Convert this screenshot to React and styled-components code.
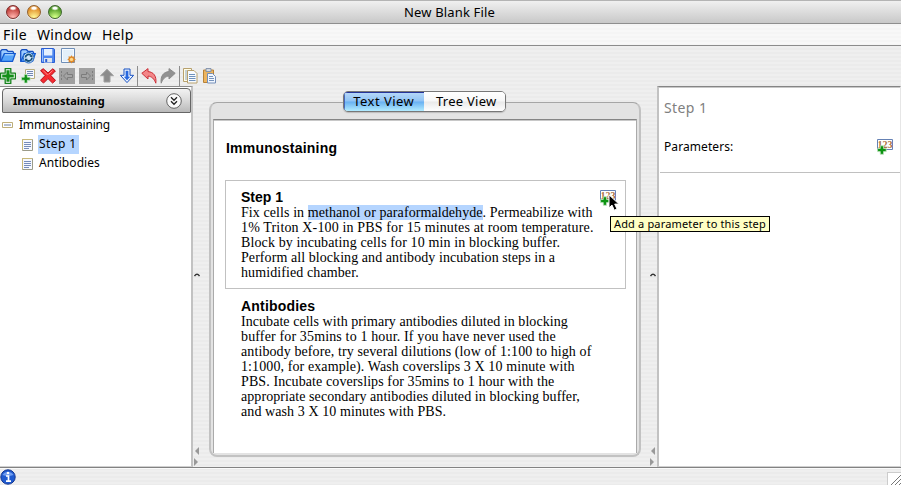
import React from "react";
import styled, { createGlobalStyle, css } from "styled-components";

const ui = `"Noto Sans", "Open Sans", sans-serif`;
const stripes = "repeating-linear-gradient(to bottom, #ebebeb 0 2px, #efefef 2px 4px)";

const GlobalStyle = createGlobalStyle`
  * { box-sizing: border-box; }
  html, body { margin: 0; padding: 0; overflow: hidden; }
  body { font-family: ${ui}; color: #000; }
  svg { display: block; flex: none; }
`;

const Window = styled.div`
  width: 901px;
  height: 485px;
  display: grid;
  grid-template-rows: 24px 22px 20px 20px 382px 17px;
  background: ${stripes};
  overflow: hidden;
`;

const Label = styled.span`
  display: block;
  white-space: pre;
  font-family: ${ui};
  font-size: ${(p) => p.$size || 13}px;
  font-weight: ${(p) => p.$weight || 400};
  line-height: ${(p) => p.$line || 18}px;
  letter-spacing: ${(p) => p.$track || 0}px;
  color: ${(p) => p.$color || "#000"};
`;

const TitleBar = styled.header`
  display: grid;
  grid-template-columns: 95px 1fr 97px;
  align-items: center;
  justify-items: center;
  background: linear-gradient(#f0f0f0, #dcdcdc 50%, #c8c8c8);
  border-top: 1px solid #b4b4b4;
  border-bottom: 1px solid #8e8e8e;
`;

const Lights = styled.div`
  display: flex;
  gap: 7px;
  justify-self: start;
  padding-left: 6px;
`;

const Light = styled.i`
  width: 14px;
  height: 14px;
  border-radius: 50%;
  border: 1px solid ${(p) => p.$edge};
  background:
    radial-gradient(ellipse 4px 2.5px at 50% 18%, #fff 40%, transparent),
    radial-gradient(circle at 50% 100%, ${(p) => p.$glow} 10%, ${(p) => p.$tone} 75%);
  box-shadow: 0 1px 0 #eee;
`;

const MenuBar = styled.nav`
  display: flex;
  align-items: center;
  gap: 10px;
  padding-left: 3px;
  border-bottom: 1px solid #8c8c8c;
  background: repeating-linear-gradient(to bottom, #f5f5f5 0 2px, #f8f8f8 2px 4px);
`;

const ToolBar = styled.div`
  display: flex;
  align-items: center;
  gap: ${(p) => p.$gap || 4}px;
`;

const ToolDivider = styled.i`
  width: 1px;
  height: 20px;
  background: #8d8d8d;
  margin: 0 -1.4px;
`;

const Content = styled.main`
  display: grid;
  grid-template-columns: 193px 16px 432px 16px 244px;
  border-bottom: 1px solid #828282;
`;

const Sidebar = styled.aside`
  background: #fff;
  border-top: 1px solid #8b8b8b;
  border-right: 2px solid #c2c2c2;
  border-bottom: 1px solid #d0d0d0;
  padding: 1px 0 0 2px;
`;

const SectionHeader = styled.div`
  display: flex;
  align-items: center;
  justify-content: space-between;
  width: 189px;
  height: 25px;
  padding: 0 8px 0 10px;
  border: 1px solid #666;
  border-radius: 4px 4px 1px 1px;
  background: linear-gradient(#f2f2f2, #dcdcdc 45%, #b9b9b9);
`;

const Tree = styled.div`
  display: flex;
  flex-direction: column;
  padding-top: 3px;
`;

const TreeRow = styled.div`
  display: flex;
  align-items: center;
  height: 19px;
  gap: 5px;
  padding-left: ${(p) => (p.$child ? 20 : 0)}px;
`;

const TreeText = styled(Label)`
  padding: 0 3px 0 1px;
  height: 19px;
  background: ${(p) => (p.$selected ? "#b5d5ff" : "transparent")};
`;

const Splitter = styled.div`
  display: flex;
  flex-direction: column;
  align-items: flex-start;
  padding: ${(p) => (p.$right ? "187px 0 0 9px" : "187px 0 0 1px")};
`;

const SplitMark = styled.svg`
  margin-top: ${(p) => p.$gap || 0}px;
`;

const Center = styled.section`
  padding-top: 16px;
`;

const GroupBox = styled.div`
  height: 355px;
  display: flex;
  flex-direction: column;
  align-items: center;
  border: 2px solid #c2c2c2;
  border-top: 1px solid #a6a6a6;
  border-radius: 8px;
  background: #e3e3e3;
  padding: 0 2px 2px;
`;

const Tabs = styled.div`
  display: flex;
  width: 163px;
  height: 21px;
  margin-top: -12px;
  margin-right: 2px;
  border: 1px solid #777;
  border-radius: 5px;
  overflow: hidden;
  flex: none;
  box-shadow: 0 1px 1px #bbb;
`;

const Tab = styled.div`
  display: flex;
  justify-content: center;
  width: 81px;
  height: 19px;
  ${(p) =>
    p.$active
      ? css`
          background: linear-gradient(#b9d9f8, #90c3f5 48%, #68b0f2 52%, #b2ecff);
          box-shadow: inset 0 1px #25349a, inset 1px 0 #4668bd;
        `
      : css`
          background: linear-gradient(#fff, #f7f7f7 48%, #e9e9e9 52%, #fff);
          padding-left: 4px;
        `}
`;

const Editor = styled.article`
  width: 100%;
  height: 334px;
  margin-top: 7px;
  flex: none;
  background: #fff;
  border: 1px solid #aaa;
  border-top-color: #858585;
  border-bottom: 0;
  box-shadow: inset 0 1px #c8c8c8;
  padding: 20px 11px 0 11px;
`;

const Heading = styled.h2`
  margin: 0;
  white-space: pre;
  font: 700 14px/16px "Liberation Sans", Arial, sans-serif;
  letter-spacing: ${(p) => p.$track || 0}px;
`;

const DocTitle = styled(Heading)`
  padding-left: 1px;
`;

const StepBlock = styled.section`
  position: relative;
  width: 401px;
  height: 109px;
  padding: 8px 0 0 15px;
  border: 1px solid ${(p) => (p.$boxed ? "#c1c1c1" : "transparent")};
  margin-top: ${(p) => (p.$boxed ? 24 : 0)}px;
`;

const Line = styled.div`
  white-space: pre;
  font: 14px/15px "Liberation Serif", "Times New Roman", serif;
  letter-spacing: ${(p) => p.$track || 0}px;
`;

const Mark = styled.mark`
  display: inline-block;
  height: 15px;
  color: inherit;
  background: #b5d5ff;
`;

const StepAction = styled.div`
  position: absolute;
  top: 9px;
  right: 9px;
`;

const Inspector = styled.aside`
  background: #fff;
  border-top: 1px solid #858585;
  border-left: 2px solid #c2c2c2;
  border-right: 1px solid #e6e6e6;
  border-bottom: 1px solid #d0d0d0;
  box-shadow: inset 0 1px #c8c8c8;
`;

const InspectorHead = styled.div`
  height: 86px;
  margin-left: 1px;
  padding: 12px 7px 0 4px;
  border-bottom: 1px solid #c0c0c0;
`;

const ParamRow = styled.div`
  display: flex;
  justify-content: space-between;
  align-items: center;
  margin-top: 21px;
`;

const StatusBar = styled.footer`
  display: flex;
  justify-content: space-between;
  align-items: flex-end;
  padding-bottom: 0;
  box-shadow: inset 0 1px #fafafa;
`;

const Grip = styled.div`
  width: 14px;
  height: 13px;
  background: #fff;
  border: 1px solid #ccc;
  border-width: 1px 0 0 1px;
`;

const Tooltip = styled.div`
  position: absolute;
  left: 610px;
  top: 216px;
  width: 160px;
  height: 16px;
  padding-left: 3px;
  border: 1px solid #000;
  background: #ffffc4;
`;

const Pointer = styled.svg`
  position: absolute;
  left: 608px;
  top: 194px;
`;

const Digits = styled.text`
  font: 700 10px "Liberation Serif", serif;
  fill: #ab7040;
`;

const Icon = ({ w = 16, h = 16, children }) => (
  <svg width={w} height={h} viewBox={`0 0 ${w} ${h}`} fill="none">
    {children}
  </svg>
);

const Folder = ({ refresh }) => (
  <Icon>
    <path d="M.7 13V3L2 1.700h4.500L8 3.300h4.600l.9.9V6" fill="#9ccbff" stroke="#164fc0" strokeWidth="1.3" />
    <path d="M.8 13.400 4.300 5.600h11l-2.800 7.800z" fill="#56a4fa" stroke="#1459d0" strokeWidth="1.300" />
    <path d="M5 6.800h8.500" stroke="#c6e4ff" />
    {refresh && (
      <>
        <circle cx="8.6" cy="9.7" r="5.3" fill="#cfe5fb" stroke="#276bc5" />
        <path d="M5.4 9.5a3.3 3.3 0 0 1 5.8-2M12 9.7a3.4 3.4 0 0 1-5.8 2.3" stroke="#15507b" strokeWidth="1.8" />
        <path d="m9.5 8.5 3-2v3zM4.6 10.7h3l-2 2.8z" fill="#174c72" />
      </>
    )}
  </Icon>
);

const Save = () => (
  <Icon>
    <path d="M1.5.5h12.2l.8.8v13.2h-13z" fill="#4d86ef" stroke="#2b5ed3" />
    <path d="M4 1h8.3v6.500H4z" fill="#e4efff" />
    <path d="M4 10h8v4.5H4z" fill="#dce4ee" />
    <path d="M5.2 11h2v3h-2z" fill="#2b5ed3" />
    <path d="M2.5 1.500v12" stroke="#9ac1ff" />
  </Icon>
);

const NewDoc = () => (
  <Icon>
    <path d="M1.5.5h13v14h-13z" fill="#f5faff" stroke="#6f8fb9" />
    <path d="M3 2h10v11H3z" fill="#e3eff9" />
    <path d="m11.5 7.3 1.2 1.4 1.9-.4-.3 1.9 1.5 1.2-1.5 1.1.3 1.9-1.9-.4-1.2 1.5-1.1-1.5-1.9.4.3-1.9-1.5-1.1 1.5-1.2-.3-1.9 1.9.4z" fill="#df8829" />
    <circle cx="11.5" cy="11.4" r="1.7" fill="#ffd989" />
  </Icon>
);

const Add = () => (
  <Icon>
    <path d="M5.200.6h5.600v4.600h4.600v5.600h-4.600v4.600H5.200v-4.600H.6V5.200h4.600z" fill="#fff" stroke="#16821c" strokeWidth="1.300" strokeLinejoin="round" />
    <path d="M6.4 2.2h3.2v4.200h4.200v3.200H9.600v4.200H6.4V9.600H2.200V6.400h4.200z" fill="#138f18" />
  </Icon>
);

const AddChild = () => (
  <Icon>
    <path d="M5.5 1.5h9v9h-9z" fill="#f5f8ff" stroke="#b8ae80" />
    <path d="M7 3.5h6M7 5.5h6M7 7.5h6" stroke="#7287b2" />
    <path d="M4.3 6.400h3v2.8h2.8v3H7.3V15h-3v-2.8H1.5v-3h2.8z" fill="#119017" stroke="#c9edca" strokeWidth=".7" />
  </Icon>
);

const Delete = () => (
  <Icon>
    <path d="M.6 2.6 3.2.7 8 4.9 12.8.800 15.400 3l-4.500 4.6 4.600 4.8-2.900 2.700-4.600-4.500-4.500 4.500L.5 12.300l4.600-4.700z" fill="#f52b31" stroke="#b80e18" />
    <path d="m3.2 2.5 4.500 4.500M12.500 2.500 8.700 6.300" stroke="#ff8787" />
  </Icon>
);

const Indent = ({ flip }) => (
  <Icon>
    <path d="M0 0h16v16H0z" fill="#a0a0a0" />
    <g transform={flip ? "matrix(-1 0 0 1 16 0)" : undefined} stroke="#7c7c7c">
      <path d="M2.5 3v2m0 1.5v2m0 1.5v2" />
      <path d="m4.5 8 4-4v2.5h5v3h-5V12z" fill="#a4a4a4" />
    </g>
  </Icon>
);

const MoveUp = () => (
  <Icon>
    <path d="m8 1.3 6.5 6.4H11V14H5V7.7H1.5z" fill="#8c8c8c" stroke="#a0a0a0" />
  </Icon>
);

const MoveDown = () => (
  <Icon>
    <path d="M5 1h6v6.300h3.600L8 14.600 1.400 7.300H5z" fill="#eff6ff" stroke="#1750c3" />
    <path d="M6.6 2.800h2.800v5.900h1.800L8 12.200 4.800 8.700h1.800z" fill="#2767df" />
  </Icon>
);

const Turn = ({ redo }) => (
  <Icon>
    <g transform={redo ? "matrix(-1 0 0 1 16 0)" : undefined}>
      <path
        d="M.8 5.3 7 .6v3c5.500.4 8.800 4.400 7.800 11.600C13.200 10.800 10.800 8.400 7 8.100V11z"
        fill={redo ? "#929292" : "#f38789"}
        stroke={redo ? "#8c8c8c" : "#cb3038"}
      />
    </g>
  </Icon>
);

const Copy = () => (
  <Icon>
    <path d="M1.5.5h8v13h-8z" fill="#fffde8" stroke="#b7a06d" />
    <path d="M3 3h4M3 5h4M3 7h4M3 9h4M3 11h3" stroke="#8ca4c0" />
    <path d="M5.5 2.5h6.500l3 3v9.500H5.500z" fill="#f8fbff" stroke="#b7a06d" />
    <path d="M7 6.5h6M7 8.5h6.500M7 10.5h6.500M7 12.5h6.500" stroke="#6e91bd" />
  </Icon>
);

const Paste = () => (
  <Icon>
    <path d="M1.5 2h10v12.500h-10z" fill="#edb55f" stroke="#b78238" />
    <path d="M4 .6h5v3H4z" fill="#d8dde5" stroke="#8090a9" />
    <path d="M5.5 5.500h5l3 3v6.500h-8z" fill="#f2f7ff" stroke="#758eb7" />
    <path d="M7 8.500h4M7 10.500h5M7 12.500h5" stroke="#7593bc" />
  </Icon>
);

const Page = () => (
  <Icon w={11} h={12}>
    <path d="M.5.5h10v11H.5z" fill="#f5f8ff" stroke="#9b9b89" />
    <path d="M.5 11V.5H10" stroke="#c8b878" />
    <path d="M2 3.5h7M2 5.5h7M2 7.5h7M2 9.5h5" stroke="#768cb9" />
  </Icon>
);

const Collapse = () => (
  <Icon w={11} h={7}>
    <path d="M.5.5h10v5H.5z" fill="#fff" stroke="#bdad78" />
    <path d="M2 3h7" stroke="#667da8" />
  </Icon>
);

const Chevrons = () => (
  <Icon>
    <circle cx="8" cy="8" r="7.3" fill="#fafafa" stroke="#626262" />
    <path d="m5 4.3 3 3 3-3M5 8.3l3 3 3-3" stroke="#222" strokeWidth="1.3" />
  </Icon>
);

const AddParam = () => (
  <Icon>
    <path d="M.5.5h15v10H.5z" fill="#fff" stroke="#6581b4" />
    <Digits x=".6" y="8.600">123</Digits>
    <path d="M3.300 6.800h3.200v2.600h2.700v3.200H6.500v2.700H3.300v-2.700H.6V9.400h2.700z" fill="#0d9412" stroke="#bce0bd" strokeWidth=".8" />
  </Icon>
);

const Info = () => (
  <Icon>
    <circle cx="8" cy="8" r="7.2" fill="#205bd0" stroke="#123692" />
    <path d="M2.5 6a6 5 0 0 1 11 0q-5.500 2-11 0" fill="#719def" />
    <circle cx="8" cy="4" r="1.3" fill="#fff" />
    <path d="M6 7h2.500v5M6 12.2h5" stroke="#fff" strokeWidth="1.7" />
  </Icon>
);

const SplitMarks = () => (
  <>
    <SplitMark width="6" height="4" viewBox="0 0 6 4">
      <path d="M.5 3q2.500-3.500 5 0" fill="none" stroke="#333" strokeWidth="1.4" />
    </SplitMark>
    <SplitMark $gap={170} width="5" height="8" viewBox="0 0 5 8">
      <path d="M5 0v8L1 4z" fill="#999" />
    </SplitMark>
    <SplitMark $gap={3} width="5" height="8" viewBox="0 0 5 8">
      <path d="M0 0v8l4-4z" fill="#999" />
    </SplitMark>
  </>
);

const antibodyLines = [
  ["Incubate cells with primary antibodies diluted in blocking", 0.05],
  ["buffer for 35mins to 1 hour. If you have never used the", 0.145],
  ["antibody before, try several dilutions (low of 1:100 to high of", 0.1],
  ["1:1000, for example). Wash coverslips 3 X 10 minute with", 0.1],
  ["PBS. Incubate coverslips for 35mins to 1 hour with the", 0.1],
  ["appropriate secondary antibodies diluted in blocking buffer,", 0.07],
  ["and wash 3 X 10 minutes with PBS.", 0.09],
];

export default function App() {
  return (
    <>
      <GlobalStyle />
      <Window>
        <TitleBar>
          <Lights>
            <Light $edge="#7b2e2c" $tone="#bd3a36" $glow="#ffb0aa" />
            <Light $edge="#92602d" $tone="#e08a25" $glow="#fff391" />
            <Light $edge="#3d662c" $tone="#4a9420" $glow="#d0ff85" />
          </Lights>
          <Label $size={13} $track={0.15}>New Blank File</Label>
        </TitleBar>
        <MenuBar>
          <Label $size={14} $track={0.4}>File</Label>
          <Label $size={14} $track={0.3}>Window</Label>
          <Label $size={14} $track={0.3}>Help</Label>
        </MenuBar>
        <ToolBar>
          <Folder />
          <Folder refresh />
          <Save />
          <NewDoc />
        </ToolBar>
        <ToolBar $gap={3.8}>
          <Add />
          <AddChild />
          <Delete />
          <Indent />
          <Indent flip />
          <MoveUp />
          <MoveDown />
          <ToolDivider />
          <Turn />
          <Turn redo />
          <ToolDivider />
          <Copy />
          <Paste />
        </ToolBar>
        <Content>
          <Sidebar>
            <SectionHeader>
              <Label $size={11} $weight={700}>Immunostaining</Label>
              <Chevrons />
            </SectionHeader>
            <Tree>
              <TreeRow>
                <Collapse />
                <TreeText $size={12} $track={-0.2}>Immunostaining</TreeText>
              </TreeRow>
              <TreeRow $child>
                <Page />
                <TreeText $size={12} $track={0.4} $selected>Step 1</TreeText>
              </TreeRow>
              <TreeRow $child>
                <Page />
                <TreeText $size={12} $track={0.08}>Antibodies</TreeText>
              </TreeRow>
            </Tree>
          </Sidebar>
          <Splitter>
            <SplitMarks />
          </Splitter>
          <Center>
            <GroupBox>
              <Tabs>
                <Tab $active>
                  <Label $size={13} $track={0.45}>Text View</Label>
                </Tab>
                <Tab>
                  <Label $size={13} $track={0.25}>Tree View</Label>
                </Tab>
              </Tabs>
              <Editor>
                <DocTitle $track={0.22}>Immunostaining</DocTitle>
                <StepBlock $boxed>
                  <Heading>Step 1</Heading>
                  <Line $track={0.08}>
                    Fix cells in <Mark>methanol or paraformaldehyde</Mark>. Permeabilize with
                  </Line>
                  <Line $track={0.145}>1% Triton X-100 in PBS for 15 minutes at room temperature.</Line>
                  <Line $track={0.12}>Block by incubating cells for 10 min in blocking buffer.</Line>
                  <Line $track={0.07}>Perform all blocking and antibody incubation steps in a</Line>
                  <Line $track={0.1}>humidified chamber.</Line>
                  <StepAction>
                    <AddParam />
                  </StepAction>
                </StepBlock>
                <StepBlock>
                  <Heading $track={0.2}>Antibodies</Heading>
                  {antibodyLines.map(([text, track]) => (
                    <Line key={text} $track={track}>{text}</Line>
                  ))}
                </StepBlock>
              </Editor>
            </GroupBox>
          </Center>
          <Splitter $right>
            <SplitMarks />
          </Splitter>
          <Inspector>
            <InspectorHead>
              <Label $size={14} $track={0.4} $color="#808080">Step 1</Label>
              <ParamRow>
                <Label $size={12} $track={0.08}>Parameters:</Label>
                <AddParam />
              </ParamRow>
            </InspectorHead>
          </Inspector>
        </Content>
        <StatusBar>
          <Info />
          <Grip>
            <Icon w={13} h={12}>
              <path d="M3 12 13 2M7 12l6-6M11 12l2-2" stroke="#777" />
            </Icon>
          </Grip>
        </StatusBar>
      </Window>
      <Pointer width="12" height="18" viewBox="0 0 12 18">
        <path d="M1 .8v13l3-2.700 2.300 5.100 2.700-1.200-2.300-4.900h4.200z" fill="#000" stroke="#fff" />
      </Pointer>
      <Tooltip>
        <Label $size={11} $line={14} $track={0.16}>Add a parameter to this step</Label>
      </Tooltip>
    </>
  );
}
